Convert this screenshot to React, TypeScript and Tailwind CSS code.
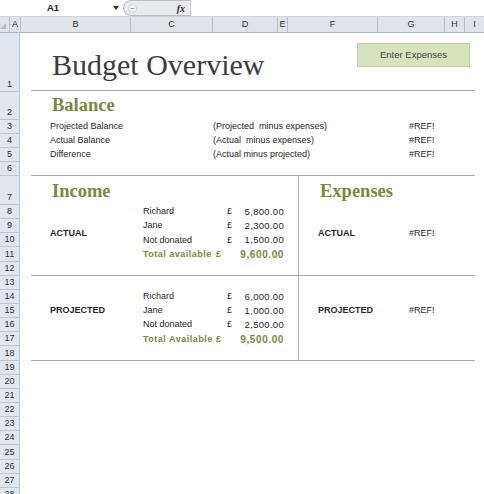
import React from "react";

const rows: { n: number; h: string }[] = [
  { n: 1, h: "h-[59px]" },
  { n: 2, h: "h-[28px]" },
  { n: 3, h: "h-[14px]" },
  { n: 4, h: "h-[14px]" },
  { n: 5, h: "h-[14px]" },
  { n: 6, h: "h-[14px]" },
  { n: 7, h: "h-[29px]" },
  ...Array.from({ length: 21 }, (_, i) => ({ n: i + 8, h: "h-[14.15px]" })),
];

const colHeads: { l: string; w: string }[] = [
  { l: "A", w: "w-[11px]" },
  { l: "B", w: "w-[110px]" },
  { l: "C", w: "w-[82px]" },
  { l: "D", w: "w-[65px]" },
  { l: "E", w: "w-[10px]" },
  { l: "F", w: "w-[90px]" },
  { l: "G", w: "w-[67px]" },
  { l: "H", w: "w-[20px]" },
  { l: "I", w: "w-[20px]" },
];

const sans = "font-['Liberation_Sans',Arial,sans-serif]";
const serif = "font-['Liberation_Serif','Times_New_Roman',serif]";

function Money({ v }: { v: string }) {
  return (
    <div className="h-full flex items-center justify-between pl-[4px] pr-[4px]">
      <span>£</span>
      <span className="text-[9.5px] tracking-[0.3px]">{v}</span>
    </div>
  );
}

function Total({ v }: { v: string }) {
  return (
    <div className="h-full -ml-[7px] flex items-center justify-between pr-[4px] font-bold text-[#78893f]">
      <span>£</span>
      <span className="text-[10px] tracking-[0.6px]">{v}</span>
    </div>
  );
}

export default function App() {
  return (
    <div className={`w-[484px] h-[494px] overflow-hidden bg-white text-[#262626] ${sans}`}>
      {/* formula bar */}
      <div className="flex h-[17px] bg-white border-b border-[#cfd5dc]">
        <div className="w-[110px] flex items-center pl-[47px] text-[9.5px] font-bold text-[#222]">A1</div>
        <div className="w-[13px] flex items-center pl-[3px]">
          <svg width="6" height="4" viewBox="0 0 6 4">
            <path d="M0 0 L6 0 L3 4 Z" fill="#333" />
          </svg>
        </div>
        <div className="w-[67px] h-[16px] rounded-l-full bg-[#e8eaed] border border-[#b9bec6] border-r-0 flex items-center justify-between pl-[4px] pr-[5px]">
          <svg width="9" height="9" viewBox="0 0 9 9">
            <circle cx="4.5" cy="4.5" r="4" fill="#f3f4f6" stroke="#c3c7cd" strokeWidth="0.8" />
            <path d="M2.5 4.5 L6.5 4.5" stroke="#9aa0a8" strokeWidth="1" />
          </svg>
          <span className={`${serif} italic font-bold text-[10px] text-[#333]`}>fx</span>
        </div>
        <div className="flex-1 border-l border-[#c8ccd2]" />
      </div>

      {/* column headers */}
      <div className="flex h-[16px] bg-[#dfe4eb] border-b border-[#a9b6c6] text-[9px] text-[#2f2f2f]">
        <div className="w-[20px] border-r border-[#b4bfcd] flex items-end justify-end pr-[3px] pb-[3px]">
          <svg width="6" height="6" viewBox="0 0 6 6">
            <path d="M6 0 L6 6 L0 6 Z" fill="#b5bcc6" />
          </svg>
        </div>
        {colHeads.map((c) => (
          <div
            key={c.l}
            className={`${c.w} shrink-0 border-r border-[#b4bfcd] flex items-center justify-center`}
          >
            {c.l}
          </div>
        ))}
      </div>

      {/* body */}
      <div className="flex">
        <div className="w-[20px] shrink-0 flex flex-col">
          {rows.map((r) => (
            <div
              key={r.n}
              className={`${r.h} shrink-0 bg-[#e1e7f0] border-b border-r border-[#bac5d4] flex items-end justify-center text-[9px] leading-[13px] text-[#2f2f2f]`}
            >
              {r.n}
            </div>
          ))}
        </div>

        <div className="flex-1 grid grid-cols-[11px_110px_82px_65px_10px_90px_67px_20px_1fr] grid-rows-[59px_28px_14px_14px_14px_14px_29px_repeat(21,14.15px)] text-[9px]">
          {/* Row 1 */}
          <div
            className={`col-start-2 col-span-4 row-start-1 self-end pl-[21px] pb-[12px] ${serif} text-[30px] leading-none text-[#3d3d3d] whitespace-nowrap`}
          >
            Budget Overview
          </div>
          <div className="col-start-6 col-span-3 row-start-1 self-start justify-self-end mt-[10px] mr-[5px] w-[113px] h-[24px] bg-[#d7e3bd] border border-[#c0cf9a] flex items-center justify-center text-[9.5px] text-[#444]">
            Enter Expenses
          </div>
          <div className="col-start-2 col-span-7 row-start-1 self-end h-px bg-[#a8a8a8] mb-px" />

          {/* Row 2 */}
          <div
            className={`col-start-2 row-start-2 self-end pl-[21px] pb-[6px] ${serif} font-bold text-[18.5px] leading-none text-[#78893f]`}
          >
            Balance
          </div>

          {/* Rows 3-5 */}
          <div className="col-start-2 row-start-3 flex items-center pl-[19px] whitespace-nowrap">Projected Balance</div>
          <div className="col-start-3 col-span-5 row-start-3 flex items-center pl-[72px] whitespace-nowrap">
            (Projected&nbsp; minus expenses)
          </div>
          <div className="col-start-7 row-start-3 flex items-center pl-[21px]">#REF!</div>

          <div className="col-start-2 row-start-4 flex items-center pl-[19px] whitespace-nowrap">Actual Balance</div>
          <div className="col-start-3 col-span-5 row-start-4 flex items-center pl-[72px] whitespace-nowrap">
            (Actual&nbsp; minus expenses)
          </div>
          <div className="col-start-7 row-start-4 flex items-center pl-[21px]">#REF!</div>

          <div className="col-start-2 row-start-5 flex items-center pl-[19px] whitespace-nowrap">Difference</div>
          <div className="col-start-3 col-span-5 row-start-5 flex items-center pl-[72px] whitespace-nowrap">
            (Actual minus projected)
          </div>
          <div className="col-start-7 row-start-5 flex items-center pl-[21px]">#REF!</div>

          <div className="col-start-2 col-span-7 row-start-6 self-end h-px bg-[#a8a8a8]" />

          {/* Row 7 headings */}
          <div
            className={`col-start-2 row-start-7 self-end pl-[21px] pb-[5px] ${serif} font-bold text-[18.5px] leading-none text-[#78893f]`}
          >
            Income
          </div>
          <div
            className={`col-start-6 row-start-7 col-span-2 self-end pl-[22px] pb-[5px] ${serif} font-bold text-[18.5px] leading-none text-[#78893f]`}
          >
            Expenses
          </div>

          {/* vertical divider */}
          <div className="col-start-6 row-start-7 row-span-12 w-px bg-[#b0b0b0] justify-self-start" />

          {/* Actual income */}
          <div className="col-start-2 row-start-8 row-span-4 flex items-center pl-[19px] font-bold">ACTUAL</div>
          <div className="col-start-3 row-start-8 flex items-center pl-[2px]">Richard</div>
          <div className="col-start-4 row-start-8"><Money v="5,800.00" /></div>
          <div className="col-start-3 row-start-9 flex items-center pl-[2px]">Jane</div>
          <div className="col-start-4 row-start-9"><Money v="2,300.00" /></div>
          <div className="col-start-3 row-start-10 flex items-center pl-[2px]">Not donated</div>
          <div className="col-start-4 row-start-10"><Money v="1,500.00" /></div>
          <div className="col-start-3 row-start-11 flex items-center pl-[2px] font-bold text-[#78893f] tracking-[0.5px] whitespace-nowrap">
            Total available
          </div>
          <div className="col-start-4 row-start-11"><Total v="9,600.00" /></div>

          <div className="col-start-6 row-start-8 row-span-4 flex items-center pl-[20px] font-bold">ACTUAL</div>
          <div className="col-start-7 row-start-8 row-span-4 flex items-center pl-[21px]">#REF!</div>

          <div className="col-start-2 col-span-7 row-start-12 self-end h-px bg-[#a8a8a8]" />

          {/* Projected income */}
          <div className="col-start-2 row-start-13 row-span-5 flex items-center pl-[19px] font-bold">PROJECTED</div>
          <div className="col-start-3 row-start-14 flex items-center pl-[2px]">Richard</div>
          <div className="col-start-4 row-start-14"><Money v="6,000.00" /></div>
          <div className="col-start-3 row-start-15 flex items-center pl-[2px]">Jane</div>
          <div className="col-start-4 row-start-15"><Money v="1,000.00" /></div>
          <div className="col-start-3 row-start-16 flex items-center pl-[2px]">Not donated</div>
          <div className="col-start-4 row-start-16"><Money v="2,500.00" /></div>
          <div className="col-start-3 row-start-17 flex items-center pl-[2px] font-bold text-[#78893f] tracking-[0.5px] whitespace-nowrap">
            Total Available
          </div>
          <div className="col-start-4 row-start-17"><Total v="9,500.00" /></div>

          <div className="col-start-6 row-start-13 row-span-5 flex items-center pl-[20px] font-bold">PROJECTED</div>
          <div className="col-start-7 row-start-13 row-span-5 flex items-center pl-[21px]">#REF!</div>

          <div className="col-start-2 col-span-7 row-start-18 self-end h-px bg-[#a8a8a8]" />
        </div>
      </div>
    </div>
  );
}
